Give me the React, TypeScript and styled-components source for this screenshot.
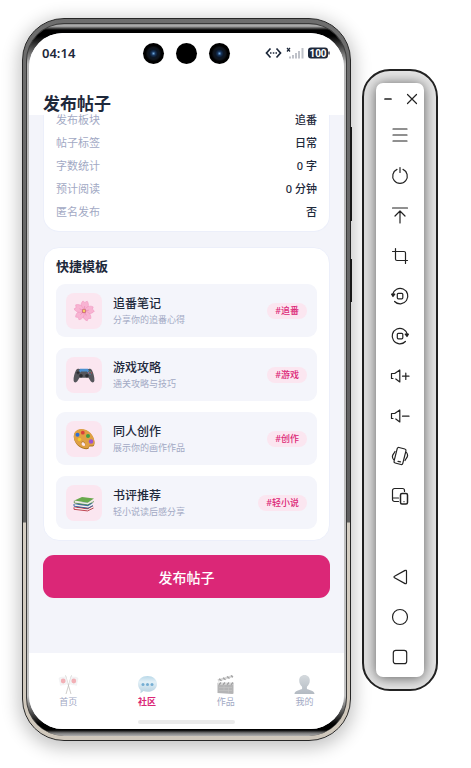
import React from 'react';
import styled, { createGlobalStyle } from 'styled-components';

const GlobalStyle = createGlobalStyle`
  *, *::before, *::after { box-sizing: border-box; }
  body {
    margin: 0;
    background: #ffffff;
    color: #1e293b;
    font-family: "Noto Sans", "Noto Sans CJK SC", sans-serif;
  }
  button { border: 0; padding: 0; background: none; font: inherit; color: inherit; cursor: pointer; }
  h1, h2, h3, p, dl, dd, dt, ul { margin: 0; padding: 0; }
  ul { list-style: none; }
`;

const Desktop = styled.div`
  display: flex;
  gap: 11px;
  min-height: 100vh;
  padding: 18px 33px 27px 22px;
`;

const Phone = styled.div`
  position: relative;
  flex: 1;
  min-width: 0;
  display: flex;
  padding: 4px 3px;
  border: 1px solid #262626;
  border-radius: 42px;
  background: linear-gradient(180deg, #6e6e6e 0, #5f5f5f 503px, #d5cec3 504px, #cfc7bb 100%);
  box-shadow: 0 4px 18px 3px rgba(0, 0, 0, 0.24);
`;

const SideKey = styled.span<{ $top: number; $length: number }>`
  position: absolute;
  right: -2px;
  top: ${(p) => p.$top}px;
  width: 2px;
  height: ${(p) => p.$length}px;
  background: #1a1a1a;
`;

const Rim = styled.div`
  flex: 1;
  min-width: 0;
  display: flex;
  padding: 9px 2px 7px;
  border: 1px solid #3a3a3a;
  border-width: 1px 1px 0;
  border-radius: 38px;
  background: linear-gradient(
    180deg,
    #8c8c8c 0,
    #b4b4b4 2px,
    #555555 4px,
    #000000 6px,
    #000000 12px,
    #b8b8b8 40px,
    #c4c4c4 calc(100% - 40px),
    #000000 calc(100% - 12px),
    #000000 calc(100% - 6px),
    #777777 calc(100% - 3px),
    #b0b0b0 100%
  );
`;

const Screen = styled.div`
  flex: 1;
  min-width: 0;
  display: flex;
  flex-direction: column;
  overflow: hidden;
  border-radius: 34px;
  background: #f3f4fa;
`;

const StatusBar = styled.div`
  display: grid;
  grid-template-columns: 1fr auto 1fr;
  align-items: center;
  height: 40px;
  padding: 0 14px 0 13px;
  background: #ffffff;
`;

const Clock = styled.time`
  font-size: 13px;
  font-weight: 600;
  line-height: 20px;
`;

const Cameras = styled.div`
  display: flex;
  gap: 12px;
`;

const Lens = styled.span<{ $glass?: boolean }>`
  width: 21px;
  height: 21px;
  border-radius: 50%;
  background: ${(p) =>
    p.$glass
      ? 'radial-gradient(circle, #6fa8dc 0, #17345c 2px, #0c1726 4px, #10151c 6px, #000000 8px)'
      : '#000000'};
`;

const StatusIcons = styled.div`
  display: flex;
  align-items: center;
  justify-content: flex-end;
  gap: 4px;
`;

const Header = styled.header`
  height: 42px;
  padding: 21px 14px 0;
  background: #ffffff;
`;

const PageTitle = styled.h1`
  font-size: 17px;
  font-weight: 700;
  line-height: 20px;
`;

const Content = styled.main`
  flex: 1;
  display: flex;
  flex-direction: column;
  gap: 15px;
  padding: 0 14px 54px;
`;

const Card = styled.section`
  padding: 11px 12px;
  border: 1px solid #eceffa;
  border-radius: 16px;
  background: #ffffff;
`;

const SummaryCard = styled(Card)`
  padding: 0 12px 8px;
  border-top: 0;
  border-radius: 0 0 16px 16px;
`;

const Summary = styled.dl`
  && { margin-top: -7px; }
`;

const SummaryRow = styled.div`
  display: flex;
  justify-content: space-between;
  font-size: 11px;
  line-height: 23px;
  dt { color: #a2a9c4; }
  dd { font-weight: 500; }
`;

const CardTitle = styled.h2`
  && { margin-bottom: 11px; }
  font-size: 13px;
  font-weight: 700;
  line-height: 14px;
`;

const TemplateList = styled.ul`
  display: grid;
  gap: 11px;
`;

const TemplateButton = styled.button`
  display: flex;
  align-items: center;
  gap: 11px;
  width: 100%;
  height: 53px;
  padding: 0 10px;
  border-radius: 9px;
  background: #f4f5fb;
  text-align: left;
`;

const TemplateIcon = styled.span`
  display: grid;
  place-items: center;
  width: 36px;
  height: 36px;
  border-radius: 8px;
  background: #fbe6f0;
`;

const TemplateText = styled.span`
  flex: 1;
  display: grid;
`;

const TemplateName = styled.span`
  font-size: 12px;
  font-weight: 500;
  line-height: 18px;
`;

const TemplateHint = styled.span`
  color: #a2a9c4;
  font-size: 9px;
  line-height: 14px;
`;

const Tag = styled.span`
  padding: 0 8px;
  border-radius: 8px;
  background: #fbe6f0;
  color: #db2777;
  font-size: 9px;
  font-weight: 500;
  line-height: 16px;
`;

const PublishButton = styled.button`
  height: 43px;
  flex: none;
  margin-top: -1px;
  border-radius: 11px;
  background: #db2777;
  color: #ffffff;
  font-size: 14px;
  font-weight: 500;
`;

const TabBar = styled.nav`
  background: #ffffff;
  padding: 21px 0 5px;
`;

const Tabs = styled.div`
  display: grid;
  grid-template-columns: repeat(4, 1fr);
`;

const Tab = styled.a<{ $active?: boolean }>`
  display: grid;
  justify-items: center;
  color: ${(p) => (p.$active ? '#db2777' : '#a2a9c4')};
  font-size: 9px;
  font-weight: ${(p) => (p.$active ? 700 : 400)};
  line-height: 14px;
  text-decoration: none;
`;

const Picture = styled.svg<{ $size: number }>`
  display: block;
  width: ${(p) => p.$size}px;
  height: ${(p) => p.$size}px;
`;

const HomeIndicator = styled.div`
  width: 97px;
  height: 4px;
  margin: 11px auto 0;
  border-radius: 2px;
  background: #ebebeb;
`;

const ToolFrame = styled.aside`
  display: flex;
  width: 76px;
  margin: 51px 0 50px;
  padding: 12px;
  overflow: hidden;
  border: 2px solid #222222;
  border-radius: 28px;
  background: #e6e6e6;
`;

const ToolPanel = styled.div`
  flex: 1;
  display: flex;
  flex-direction: column;
  border-radius: 7px;
  background: #ffffff;
  box-shadow: 0 1px 13px rgba(0, 0, 0, 0.62);
`;

const WindowButtons = styled.div`
  display: grid;
  grid-template-columns: 1fr 1fr;
  height: 33px;
`;

const Tool = styled.button`
  display: grid;
  place-items: center;
  height: 40px;
`;

const WindowButton = styled(Tool)`
  height: 32px;
`;

const NavTools = styled.div`
  display: grid;
  margin-top: auto;
`;

const Glyph = styled.svg`
  width: 20px;
  height: 20px;
  display: block;
  fill: none;
  stroke: #222222;
  stroke-width: 1.2;
  stroke-linecap: round;
  stroke-linejoin: round;
`;

const summary = [
  ['发布板块', '追番'],
  ['帖子标签', '日常'],
  ['字数统计', '0 字'],
  ['预计阅读', '0 分钟'],
  ['匿名发布', '否'],
];

const Blossom = () => (
  <Picture $size={22} viewBox="0 0 22 22" aria-hidden>
    {[8, 80, 152, 224, 296].map((angle) => (
      <g key={angle} transform={`rotate(${angle} 11 11)`}>
        <path d="M11 11C7 8.500 6.200 4 8.600 1.200L10.600 2.400L12.800 .8C15.800 4 15 8.500 11 11z" fill="#f8b3d2" stroke="#ee93bd" strokeWidth="0.500" />
        <path d="M11 10.500V6" stroke="#e57fae" strokeWidth="0.500" />
      </g>
    ))}
    <circle cx="11" cy="11" r="2.200" fill="#c8607d" />
    <circle cx="11" cy="11" r="1.400" fill="#f4cf62" />
  </Picture>
);

const Gamepad = () => (
  <Picture $size={22} viewBox="0 0 22 22" aria-hidden>
    <path d="M3 6.200C4 4.500 6 4.300 7.500 5.200L8.500 6h5l1-.8C16 4.300 18 4.500 19 6.200c1.600 3 2.600 7.300 2.400 10.300-.2 2.200-2.500 2.600-3.700.8l-2.200-3.600h-9l-2.200 3.600c-1.200 1.800-3.500 1.400-3.700-.8C.4 13.500 1.400 9.200 3 6.200z" fill="#55565c" />
    <path d="M7 4.800h8l1 2.200-2.500 2h-5L6 7z" fill="#4a8fd0" />
    <path d="M8 7.500h6v2.500H8z" fill="#55565c" />
    <circle cx="8" cy="11.800" r="1.800" fill="#2c2d31" />
    <circle cx="14" cy="11.800" r="1.800" fill="#2c2d31" />
    <path d="M5 7.300v3M3.500 8.800h3" stroke="#26272b" strokeWidth="1" />
    <circle cx="17" cy="7.500" r=".6" fill="#62bd79" />
    <circle cx="18.300" cy="8.800" r=".6" fill="#dc5454" />
    <circle cx="15.700" cy="8.800" r=".6" fill="#d486bb" />
    <circle cx="17" cy="10.100" r=".6" fill="#5b9bd8" />
  </Picture>
);

const Palette = () => (
  <Picture $size={22} viewBox="0 0 22 22" aria-hidden>
    <path d="M2 4.500C5.500-.5 13 1 17.500 5.500c3.500 3.700 4.800 9.500 3.500 12-1 1.800-3 .6-4.800 1.200-.8.400.2 2-1.200 2.300C10 22 3.500 18 1.500 12.500.5 9.500.5 6.700 2 4.500zM9 14.500c-1.300 1-.8 3.300 1 4 1.700.6 2.800-.8 2-2.500-.6-1.400-2-2.100-3-1.500z" fill="#a9741f" fillRule="evenodd" />
    <path d="M2 4C5.500-.8 13 .5 17.500 5c3.500 3.700 4.800 9 3.500 11.500-1 1.800-3 .6-4.800 1.200-.8.400.2 2-1.200 2.300C10 21 3.500 17.300 1.500 12 .5 9 .5 6.200 2 4zM9 13.800c-1.300 1-.8 3.300 1 4 1.700.6 2.800-.8 2-2.500-.6-1.400-2-2.100-3-1.500z" fill="#dfa044" fillRule="evenodd" />
    <circle cx="4.500" cy="6.800" r="2" fill="#2f6fd6" />
    <circle cx="9.800" cy="4.700" r="1.900" fill="#d93d3d" />
    <circle cx="15" cy="8" r="2" fill="#3f9f45" />
    <circle cx="18" cy="13.500" r="2.300" fill="#9a55cf" />
    <circle cx="6.500" cy="11.500" r="1.800" fill="#f1c92f" />
  </Picture>
);

const Books = () => (
  <Picture $size={22} viewBox="0 0 22 22" aria-hidden>
    <path d="M1 15.500l6-2.500 13.500 1-6 3.500z" fill="#c83d45" />
    <path d="M1.300 15.500l13.200 2 5.600-3v1.500l-5.600 2.700-13.200-1.500z" fill="#f2eeea" />
    <path d="M1 15.300v2l13.500 1.600 6-2.900" fill="none" stroke="#b8323f" strokeWidth=".9" />
    <path d="M1 12.300l6-2 13 1-5 3.200z" fill="#3f72b6" />
    <path d="M1.500 12.500l13.500 1.800 4.800-2.800v2l-4.800 2.500-13.500-1.700z" fill="#f4f1ed" />
    <path d="M1 12v2.200l14 2 5-2.700" fill="none" stroke="#2f5c9b" strokeWidth=".9" />
    <path d="M1.500 9l13 1.900 6-3.300v1.900l-5.800 3.200L1.500 11z" fill="#efece5" />
    <path d="M1.300 8.500L9 5l12 1.500-6.300 4.200z" fill="#69a94d" />
    <path d="M1.300 8.700V11l13.400 1.900L21 9.500" fill="none" stroke="#477f37" strokeWidth=".7" />
  </Picture>
);

const Flags = () => (
  <Picture $size={21} viewBox="0 0 21 21" aria-hidden>
    <path d="M7.500 1.500L13 20M13.500 1.500L8 20" stroke="#c4c1be" strokeWidth="0.800" />
    <path d="M7.800 2.500C6 3.500 4 2.500 1 4l1.500 7.500C5 10.500 7.500 11 9.800 9.500zM13.200 2.500c1.800 1 3.800 0 6.800 1.500l-1.500 7.500C16 10.500 13.500 11 11.200 9.500z" fill="#f4f4f5" stroke="#ebebed" strokeWidth=".4" />
    <circle cx="5.200" cy="7" r="2.400" fill="#f2b0b6" />
    <circle cx="15.800" cy="7" r="2.400" fill="#f2b0b6" />
  </Picture>
);

const Bubble = () => (
  <Picture $size={21} viewBox="0 0 21 21" aria-hidden>
    <defs>
      <linearGradient id="bubble" x1="0" y1="0" x2="0" y2="1">
        <stop offset="0" stopColor="#b8d8e8" />
        <stop offset="0.350" stopColor="#e3f0f7" />
        <stop offset="1" stopColor="#b4d0e0" />
      </linearGradient>
    </defs>
    <path d="M10.500 2C16 2 20 5.300 20 10s-4 7.800-9.500 7.800c-1.500 0-2.900-.2-4.200-.7C5.500 18 4.500 19 3.300 19.200c.4-1 .4-2.200.2-3.300C1.900 14.400 1 12.300 1 10c0-4.700 4-8 9.500-8z" fill="url(#bubble)" />
    <circle cx="6" cy="10.500" r="1.500" fill="#75aed3" />
    <circle cx="10.500" cy="10.500" r="1.500" fill="#75aed3" />
    <circle cx="15" cy="10.500" r="1.500" fill="#75aed3" />
  </Picture>
);

const Clapper = () => (
  <Picture $size={21} viewBox="0 0 21 21" aria-hidden>
    <path d="M2.500 9h16v10.500l-1 .5-15-1z" fill="#b4b4b5" />
    <path d="M2.500 5.200L17.500 1l.6 2.300L3.200 7.700z" fill="#dadada" />
    <path d="M4 4.800l2.500 2M8 3.700l2.500 2M12 2.600l2.500 2M16 1.500l2 1.700" stroke="#a0a0a1" strokeWidth="1.300" />
    <path d="M2.500 8.500h16v2.300h-16z" fill="#dedede" />
    <path d="M4 10.800L6 8.500M8 10.800L10 8.500M12 10.800L14 8.500M16 10.800L18 8.500" stroke="#a0a0a1" strokeWidth="1.300" />
    <path d="M4 13.500h13M4 16.500h13M9 11v5M13.500 13.500v5" stroke="#c6c6c6" strokeWidth=".6" />
  </Picture>
);

const Person = () => (
  <Picture $size={21} viewBox="0 0 21 21" aria-hidden>
    <defs>
      <linearGradient id="person" x1="0" y1="0" x2="0" y2="1">
        <stop offset="0" stopColor="#d5dade" />
        <stop offset="1" stopColor="#b3bac2" />
      </linearGradient>
    </defs>
    <path d="M10.500 1c3.200 0 5.300 2.300 5.300 5.500 0 2.600-1.200 5-2.900 6.200v2c1 1.300 7.600 1.500 7.600 5.300H.5c0-3.800 6.600-4 7.600-5.300v-2C6.400 11.500 5.200 9.100 5.200 6.500 5.200 3.300 7.300 1 10.500 1z" fill="url(#person)" />
  </Picture>
);

const templates = [
  { icon: <Blossom />, name: '追番笔记', hint: '分享你的追番心得', tag: '#追番' },
  { icon: <Gamepad />, name: '游戏攻略', hint: '通关攻略与技巧', tag: '#游戏' },
  { icon: <Palette />, name: '同人创作', hint: '展示你的画作作品', tag: '#创作' },
  { icon: <Books />, name: '书评推荐', hint: '轻小说读后感分享', tag: '#轻小说' },
];

const tabs = [
  { icon: <Flags />, name: '首页' },
  { icon: <Bubble />, name: '社区', active: true },
  { icon: <Clapper />, name: '作品' },
  { icon: <Person />, name: '我的' },
];

const speaker = 'M1.500 7.500v5M1.500 7.500h3.200L9.800 4v12l-4-3M1.500 12.500h1.500';

const tools: { label: string; art: React.ReactNode }[] = [
  { label: '菜单', art: <path d="M3 3h14M3 9h14M3 15h14" /> },
  { label: '电源', art: <path d="M7 3.400a7.300 7.300 0 1 0 6 0M10 1.500v5" /> },
  { label: '置顶', art: <path d="M2.500 2h15M10 17V5M5 10l5-5 5 5" /> },
  { label: '截图', art: <path d="M2.500 5.500H14a1.500 1.500 0 0 1 1.500 1.500V17.500M5.500 2.500V13a1.500 1.500 0 0 0 1.500 1.500H17.500" /> },
  {
    label: '向左旋转',
    art: (
      <>
        <path d="M2.600 8.500a7.700 7.700 0 1 1 2 7" />
        <path d="M1.600 8.200h3.200L3 10.500z" fill="#222222" />
        <rect x="7.300" y="7.300" width="5.500" height="5.500" rx="1" />
      </>
    ),
  },
  {
    label: '向右旋转',
    art: (
      <>
        <path d="M17.400 8.500a7.700 7.700 0 1 0-2 7" />
        <path d="M18.400 8.200h-3.200L17 10.500z" fill="#222222" />
        <rect x="7.300" y="7.300" width="5.500" height="5.500" rx="1" />
      </>
    ),
  },
  { label: '增大音量', art: <path d={speaker + 'M12.500 10.200h6.500M15.800 7v6.500'} /> },
  { label: '减小音量', art: <path d={speaker + 'M12.500 10.200h6.500'} /> },
  {
    label: '摇一摇',
    art: (
      <>
        <rect x="5.500" y="2" width="9" height="16" rx="1.500" transform="rotate(14 10 10)" />
        <path d="M5 5.500L3.800 7.500C2 9.500 2 11.500 3.500 13.500M15 14.500l1.200-2C18 10.500 18 8.500 16.500 6.500M8 15.300l2.500.6" />
      </>
    ),
  },
  {
    label: '多设备',
    art: (
      <>
        <path d="M8.500 15.500H4.500a2 2 0 0 1-2-2V4.500a2 2 0 0 1 2-2h8a2 2 0 0 1 2 2v1M2.500 12h6" />
        <rect x="10.500" y="7.500" width="7" height="10.500" rx="1.500" strokeWidth="1.500" />
        <path d="M14 15.500v.2" />
      </>
    ),
  },
];

const navTools: { label: string; art: React.ReactNode }[] = [
  { label: '返回', art: <path d="M16.500 4.200v11.600a.9.900 0 0 1-1.400.8L4.500 10.800a.9.900 0 0 1 0-1.600l10.600-5.800a.9.900 0 0 1 1.400.8z" /> },
  { label: '主页', art: <circle cx="10" cy="10" r="7.500" /> },
  { label: '多任务', art: <rect x="3.300" y="3.300" width="13.400" height="13.400" rx="2.500" /> },
];

function StatusArea() {
  return (
    <StatusBar>
      <Clock>04:14</Clock>
      <Cameras>
        <Lens $glass />
        <Lens />
        <Lens $glass />
      </Cameras>
      <StatusIcons>
        <svg width="17" height="12" viewBox="0 0 17 12" fill="none" stroke="#1e293b" strokeWidth="1.700">
          <path d="M5.500 1.500L1.500 6l4 4.500M11.500 1.500l4 4.500-4 4.500" />
          <path d="M5 6h1.500M7.800 6h1.500M10.500 6H12" />
        </svg>
        <svg width="18" height="12" viewBox="0 0 18 12">
          <path d="M1 1l3 3.500M4 1L1 4.500" stroke="#1e293b" strokeWidth="1.200" />
          <path d="M4 11.500V9.500M7 11.500V8M10 11.500V6M13 11.500V4M16.500 11.500V1" stroke="#bfc2c9" strokeWidth="2" />
        </svg>
        <svg width="22" height="12" viewBox="0 0 22 12" role="img" aria-label="电量 100">
          <rect x="0" y="0.500" width="20" height="11" rx="3" fill="#1e293b" />
          <path d="M21 4.500v3" stroke="#1e293b" strokeWidth="1.300" />
          <text x="10" y="9.600" textAnchor="middle" fill="#ffffff" fontSize="10" fontWeight="700" fontFamily="Roboto, sans-serif">100</text>
        </svg>
      </StatusIcons>
    </StatusBar>
  );
}

export default function App() {
  return (
    <>
      <GlobalStyle />
      <Desktop>
        <Phone>
          <SideKey $top={108} $length={94} />
          <SideKey $top={240} $length={43} />
          <Rim>
            <Screen>
              <StatusArea />
              <Header>
                <PageTitle>发布帖子</PageTitle>
              </Header>
              <Content>
                <SummaryCard>
                  <Summary>
                    {summary.map(([label, value]) => (
                      <SummaryRow key={label}>
                        <dt>{label}</dt>
                        <dd>{value}</dd>
                      </SummaryRow>
                    ))}
                  </Summary>
                </SummaryCard>
                <Card>
                  <CardTitle>快捷模板</CardTitle>
                  <TemplateList>
                    {templates.map((t) => (
                      <li key={t.name}>
                        <TemplateButton type="button">
                          <TemplateIcon>{t.icon}</TemplateIcon>
                          <TemplateText>
                            <TemplateName>{t.name}</TemplateName>
                            <TemplateHint>{t.hint}</TemplateHint>
                          </TemplateText>
                          <Tag>{t.tag}</Tag>
                        </TemplateButton>
                      </li>
                    ))}
                  </TemplateList>
                </Card>
                <PublishButton type="button">发布帖子</PublishButton>
              </Content>
              <TabBar>
                <Tabs>
                  {tabs.map((t) => (
                    <Tab key={t.name} href="#" $active={t.active}>
                      {t.icon}
                      {t.name}
                    </Tab>
                  ))}
                </Tabs>
                <HomeIndicator />
              </TabBar>
            </Screen>
          </Rim>
        </Phone>
        <ToolFrame>
          <ToolPanel>
            <WindowButtons>
              <WindowButton type="button" aria-label="最小化">
                <Glyph viewBox="0 0 20 20"><path d="M7 10h6" strokeWidth="1.700" /></Glyph>
              </WindowButton>
              <WindowButton type="button" aria-label="关闭">
                <Glyph viewBox="0 0 20 20"><path d="M5.500 5.500l9 9M14.500 5.500l-9 9" /></Glyph>
              </WindowButton>
            </WindowButtons>
            {tools.map((t) => (
              <Tool key={t.label} type="button" aria-label={t.label}>
                <Glyph viewBox="0 0 20 20">{t.art}</Glyph>
              </Tool>
            ))}
            <NavTools>
              {navTools.map((t) => (
                <Tool key={t.label} type="button" aria-label={t.label}>
                  <Glyph viewBox="0 0 20 20">{t.art}</Glyph>
                </Tool>
              ))}
            </NavTools>
          </ToolPanel>
        </ToolFrame>
      </Desktop>
    </>
  );
}
